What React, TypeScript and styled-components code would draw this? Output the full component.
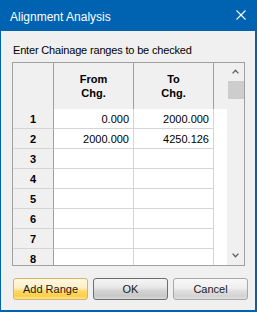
import React from 'react';
import styled, { createGlobalStyle } from 'styled-components';

const GlobalStyle = createGlobalStyle`
  html, body {
    margin: 0;
    padding: 0;
    background: #f0f0f0;
  }
  body {
    font-family: 'Liberation Sans', Arial, sans-serif;
  }
`;

const Window = styled.div`
  width: 257px;
  height: 312px;
  box-sizing: border-box;
  border: solid #0063b1;
  border-width: 0 2px 2px 1px;
  background: #f0f0f0;
  display: flex;
  flex-direction: column;
`;

const TitleBar = styled.div`
  height: 31px;
  flex-shrink: 0;
  background: #0063b1;
  color: #fff;
  display: flex;
  align-items: center;
  justify-content: space-between;
  padding: 3px 9px 0 9px;
  box-sizing: border-box;
  font-size: 12px;
`;

const CloseIcon = styled.svg`
  width: 10px;
  height: 10px;
  margin-top: -4px;
`;

const Content = styled.div`
  flex: 1;
  display: flex;
  flex-direction: column;
  padding: 13px 0 0 11px;
`;

const Label = styled.div`
  font-size: 11px;
  line-height: 13px;
  letter-spacing: -0.17px;
  color: #000;
  margin-bottom: 5px;
  padding-left: 1px;
`;

const GridFrame = styled.div`
  width: 233px;
  height: 204px;
  box-sizing: border-box;
  border: 1px solid #a0a0a0;
  display: flex;
  overflow: hidden;
  background: #fff;
`;

const Table = styled.div`
  width: 214px;
  display: grid;
  grid-template-columns: 41px 80px 80px 13px;
  grid-template-rows: 46px repeat(8, 20px);
  align-content: start;
  overflow: hidden;
  font-size: 11px;
`;

const HeaderCell = styled.div<{ $last?: boolean }>`
  background: #f0f0f0;
  box-sizing: border-box;
  border-right: ${({ $last }) => ($last ? 'none' : '1px solid #a0a0a0')};
  display: flex;
  align-items: center;
  justify-content: center;
  text-align: center;
  font-weight: bold;
  line-height: 14px;
  padding-bottom: 1px;
`;

const RowHeader = styled.div`
  background: #f0f0f0;
  box-sizing: border-box;
  border-right: 1px solid #a0a0a0;
  border-bottom: 1px solid #d5d5d5;
  display: flex;
  align-items: center;
  justify-content: center;
  font-weight: bold;
`;

const DataCell = styled.div<{ $filler?: boolean }>`
  background: #fff;
  box-sizing: border-box;
  border-right: ${({ $filler }) => ($filler ? 'none' : '1px solid #d5d5d5')};
  border-bottom: ${({ $filler }) => ($filler ? 'none' : '1px solid #d5d5d5')};
  display: flex;
  align-items: center;
  justify-content: flex-end;
  padding-right: 4px;
  color: #000;
`;

const ScrollBar = styled.div`
  width: 17px;
  background: #f0f0f0;
  display: flex;
  flex-direction: column;
`;

const ArrowButton = styled.div<{ $down?: boolean }>`
  height: 17px;
  flex-shrink: 0;
  display: flex;
  align-items: center;
  justify-content: center;
  padding-bottom: ${({ $down }) => ($down ? '3px' : '0')};
  box-sizing: border-box;
`;

const Track = styled.div`
  flex: 1;
  padding: 1px 0 0 1px;
`;

const Thumb = styled.div`
  width: 16px;
  height: 18px;
  background: #cdcdcd;
`;

const ButtonRow = styled.div`
  display: flex;
  gap: 5px;
  margin-top: 12px;
  padding-left: 1px;
`;

const Button = styled.button<{ $variant?: 'hot' | 'default' | 'normal' }>`
  width: 75px;
  height: 22px;
  box-sizing: border-box;
  padding: 0;
  border-radius: 3px;
  font-family: 'Liberation Sans', Arial, sans-serif;
  font-size: 11px;
  color: #1a1a1a;
  border: 1px solid
    ${({ $variant }) =>
      $variant === 'hot' ? '#d4b36a' : $variant === 'default' ? '#6e6e6e' : '#a8a8a8'};
  background: ${({ $variant }) =>
    $variant === 'hot'
      ? 'linear-gradient(to bottom, #fff8e2 0%, #fdefc4 45%, #fdd96a 60%, #fccf45 85%, #fde39a 100%)'
      : $variant === 'default'
      ? 'linear-gradient(to bottom, #f4f4f4 0%, #e9e9e9 40%, #d3d3d3 60%, #c8c8c8 85%, #dadada 100%)'
      : 'linear-gradient(to bottom, #f8f8f8 0%, #efefef 45%, #dfdfdf 60%, #d3d3d3 85%, #e0e0e0 100%)'};
`;

const rows = [
  ['1', '0.000', '2000.000'],
  ['2', '2000.000', '4250.126'],
  ['3', '', ''],
  ['4', '', ''],
  ['5', '', ''],
  ['6', '', ''],
  ['7', '', ''],
  ['8', '', ''],
];

const Chevron = ({ up }: { up?: boolean }) => (
  <svg width="7" height="5" viewBox="0 0 7 5">
    <polyline
      points={up ? '0.6,4.4 3.5,1.2 6.4,4.4' : '0.6,0.6 3.5,3.8 6.4,0.6'}
      fill="none"
      stroke="#606060"
      strokeWidth="1.4"
    />
  </svg>
);

export default function App() {
  return (
    <>
      <GlobalStyle />
      <Window>
        <TitleBar>
          <span>Alignment Analysis</span>
          <CloseIcon viewBox="0 0 10 10">
            <path d="M0.5 0.5 L9.5 9.5 M9.5 0.5 L0.5 9.5" stroke="#fff" strokeWidth="1.1" />
          </CloseIcon>
        </TitleBar>
        <Content>
          <Label>Enter Chainage ranges to be checked</Label>
          <GridFrame>
            <Table>
              <HeaderCell />
              <HeaderCell>
                From
                <br />
                Chg.
              </HeaderCell>
              <HeaderCell>
                To
                <br />
                Chg.
              </HeaderCell>
              <HeaderCell $last />
              {rows.map((r) => (
                <React.Fragment key={r[0]}>
                  <RowHeader>{r[0]}</RowHeader>
                  <DataCell>{r[1]}</DataCell>
                  <DataCell>{r[2]}</DataCell>
                  <DataCell $filler />
                </React.Fragment>
              ))}
            </Table>
            <ScrollBar>
              <ArrowButton>
                <Chevron up />
              </ArrowButton>
              <Track>
                <Thumb />
              </Track>
              <ArrowButton $down>
                <Chevron />
              </ArrowButton>
            </ScrollBar>
          </GridFrame>
          <ButtonRow>
            <Button $variant="hot">Add Range</Button>
            <Button $variant="default">OK</Button>
            <Button $variant="normal">Cancel</Button>
          </ButtonRow>
        </Content>
      </Window>
    </>
  );
}
